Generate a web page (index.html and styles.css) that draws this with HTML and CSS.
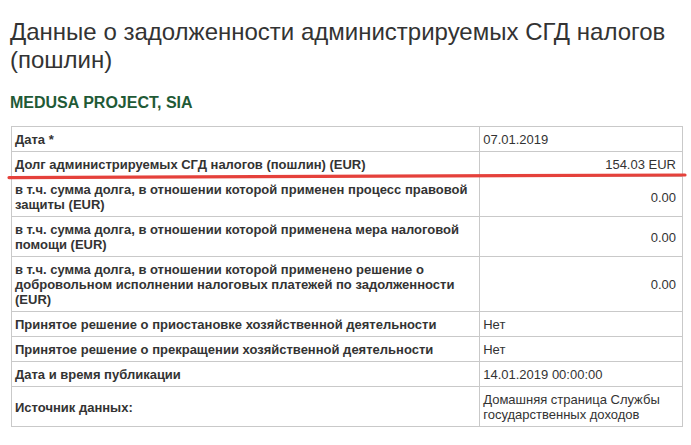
FILE: index.html
```html
<!DOCTYPE html>
<html lang="ru">
<head>
<meta charset="utf-8">
<title>Данные о задолженности</title>
<link rel="stylesheet" href="styles.css">
</head>
<body>
<div class="page">
  <h1 class="title">Данные о задолженности администрируемых СГД налогов (пошлин)</h1>
  <h2 class="company">MEDUSA PROJECT, SIA</h2>
  <div class="table-wrap">
    <table class="debt">
      <colgroup><col class="c-label"><col class="c-value"></colgroup>
      <tbody>
        <tr><th>Дата *</th><td>07.01.2019</td></tr>
        <tr><th>Долг администрируемых СГД налогов (пошлин) (EUR)</th><td class="num">154.03 EUR</td></tr>
        <tr><th>в т.ч. сумма долга, в отношении которой применен процесс правовой защиты (EUR)</th><td class="num">0.00</td></tr>
        <tr><th>в т.ч. сумма долга, в отношении которой применена мера налоговой помощи (EUR)</th><td class="num">0.00</td></tr>
        <tr><th>в т.ч. сумма долга, в отношении которой применено решение о добровольном исполнении налоговых платежей по задолженности (EUR)</th><td class="num">0.00</td></tr>
        <tr><th>Принятое решение о приостановке хозяйственной деятельности</th><td>Нет</td></tr>
        <tr><th>Принятое решение о прекращении хозяйственной деятельности</th><td>Нет</td></tr>
        <tr><th>Дата и время публикации</th><td>14.01.2019 00:00:00</td></tr>
        <tr><th>Источник данных:</th><td>Домашняя страница Службы государственных доходов</td></tr>
      </tbody>
    </table>
    <svg class="mark" width="691" height="12" viewBox="0 0 691 12" aria-hidden="true">
      <path d="M9 7.6 Q 300 5.6 685 5" stroke="#e5413b" stroke-width="3.2" fill="none" stroke-linecap="round"/>
    </svg>
  </div>
</div>
</body>
</html>
```

FILE: styles.css
```css
html, body {
  margin: 0;
  padding: 0;
  background: #ffffff;
}

.page {
  padding: 18px 10px 0 10px;
  font-family: "Liberation Sans", Arial, sans-serif;
  color: #333333;
}

.title {
  margin: 0;
  font-size: 24px;
  line-height: 28px;
  font-weight: normal;
  color: #333333;
  width: 660px;
}

.company {
  margin: 19px 0 0 0;
  font-size: 16px;
  line-height: 20px;
  font-weight: bold;
  color: #1f5a36;
}

.table-wrap {
  position: relative;
  margin-top: 13px;
}

.debt {
  margin-left: 1px;
  width: 672px;
  border-collapse: collapse;
  font-size: 13px;
  line-height: 15px;
}

.c-label { width: 469px; }
.c-value { width: 203px; }

.debt th,
.debt td {
  border: 1px solid #c9c9c9;
  padding: 5px 6px 4px 3px;
  vertical-align: middle;
  text-align: left;
}

.debt th {
  font-weight: bold;
  color: #333333;
}

.debt td {
  font-weight: normal;
  color: #333333;
}

.debt td.num {
  text-align: right;
}

.mark {
  position: absolute;
  left: -10px;
  top: 44px;
}
```
